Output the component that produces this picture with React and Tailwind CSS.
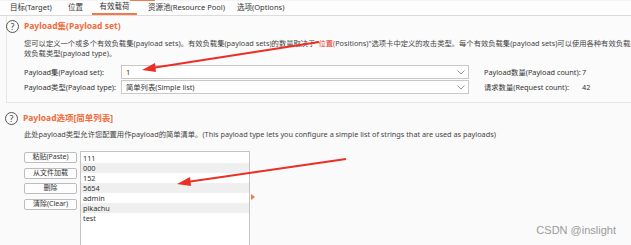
export default function App() {
  const font = { fontFamily: '"Noto Sans", "Noto Sans CJK SC", sans-serif' };
  const items = ["111", "000", "152", "5654", "admin", "pikachu", "test"];
  const Q = () => (
    <div className="w-[13px] h-[13px] rounded-full border border-[#555] flex items-center justify-center text-[9px] leading-none text-[#444] shrink-0">?</div>
  );
  const Chevron = () => (
    <svg width="8" height="5" viewBox="0 0 8 5" className="shrink-0">
      <path d="M0.5 0.5 L4 4 L7.5 0.5" fill="none" stroke="#888" strokeWidth="0.9" />
    </svg>
  );
  return (
    <div className="relative w-[631px] h-[245px] overflow-hidden bg-[#fafafa] text-[#333]" style={font}>
      {/* top strip */}
      <div className="h-[1px] flex bg-[#f4f4f4]">
        <div className="ml-[130px] w-[25px] h-[1px] bg-[#f07b4a]" />
      </div>
      {/* tabs */}
      <div className="h-[15px] flex items-stretch bg-[#fdfdfd] border-b border-[#dcdcdc] text-[7.5px] text-[#333]">
        <div className="pl-[10px] w-[68px] flex items-center whitespace-nowrap">目标(Target)</div>
        <div className="w-[24px] flex items-center whitespace-nowrap">位置</div>
        <div className="w-[45px] flex items-center justify-center border-b-2 border-[#f07b4a] whitespace-nowrap">有效载荷</div>
        <div className="pl-[11px] w-[100px] flex items-center whitespace-nowrap">资源池(Resource Pool)</div>
        <div className="flex items-center whitespace-nowrap">选项(Options)</div>
      </div>
      {/* section 1 */}
      <div className="ml-[6px] h-[87px] border-l border-b border-[#e6e6e6] bg-[#fbfbfb]">
        <div className="flex items-center gap-[5px] h-[21px] -ml-[1px]">
          <Q />
          <div className="text-[8.5px] font-bold text-[#f26b3a] leading-none whitespace-nowrap">Payload集(Payload set)</div>
        </div>
        <div className="pl-[17px] pt-[2px] text-[7.3px] leading-[9.5px] text-[#444] whitespace-nowrap">
          <div>您可以定义一个或多个有效负载集(payload sets)。有效负载集(payload sets)的数量取决于"<span className="text-[#e03c2c]">位置(</span>Positions)"选项卡中定义的攻击类型。每个有效负载集(payload sets)可以使用各种有效负载类型(payload</div>
          <div>效负载类型(payload type)。</div>
        </div>
        <div className="pl-[17px] mt-[7px] flex flex-col gap-[1px] text-[7.3px] text-[#333]">
          <div className="flex items-center h-[14px]">
            <div className="w-[97px] whitespace-nowrap">Payload集(Payload set):</div>
            <div className="w-[348px] h-[14px] bg-white border border-[#c8c8c8] flex items-center justify-between pl-[4px] pr-[3px]">
              <span>1</span>
              <Chevron />
            </div>
            <div className="ml-[15px] w-[98px] whitespace-nowrap">Payload数量(Payload count):</div>
            <div>7</div>
          </div>
          <div className="flex items-center h-[14px]">
            <div className="w-[97px] whitespace-nowrap">Payload类型(Payload type):</div>
            <div className="w-[348px] h-[14px] bg-white border border-[#c8c8c8] flex items-center justify-between pl-[4px] pr-[3px]">
              <span>简单列表(Simple list)</span>
              <Chevron />
            </div>
            <div className="ml-[15px] w-[98px] whitespace-nowrap">请求数量(Request count):</div>
            <div>42</div>
          </div>
        </div>
      </div>
      {/* section 2 */}
      <div className="pl-[5px]">
        <div className="flex items-center gap-[5px] h-[14px] mt-[8px]">
          <Q />
          <div className="text-[8.5px] font-bold text-[#f26b3a] leading-none whitespace-nowrap">Payload选项[简单列表]</div>
        </div>
        <div className="pl-[19px] mt-[5px] text-[7.3px] leading-[9px] text-[#444] whitespace-nowrap">
          此处payload类型允许您配置用作payload的简单清单。(This payload type lets you configure a simple list of strings that are used as payloads)
        </div>
        <div className="pl-[19px] mt-[12px] flex items-start">
          <div className="w-[53px] flex flex-col gap-[4.5px] pt-[1px]">
            {["粘贴(Paste)", "从文件加载", "删除", "清除(Clear)"].map((t) => (
              <div key={t} className="h-[11px] rounded-[2px] border border-[#bdbdbd] bg-[#fdfdfd] flex items-center justify-center text-[7px] text-[#333] whitespace-nowrap">{t}</div>
            ))}
          </div>
          <div className="ml-[3px] w-[170px] h-[95px] border border-[#c4c4c4] bg-white pt-[1px]">
            {items.map((t, i) => (
              <div key={t} className={`h-[10px] pl-[2px] flex items-center text-[7.3px] text-[#333] ${i % 2 === 1 ? "bg-[#efefef]" : ""}`}>{t}</div>
            ))}
          </div>
          <div className="ml-[1px] mt-[43px] w-0 h-0 border-y-[3px] border-y-transparent border-l-[4px] border-l-[#f07b4a]" />
        </div>
      </div>
      {/* watermark */}
      <div className="absolute right-[15px] bottom-[9px] text-[11px] text-[#9a9a9a] leading-none" style={{ fontFamily: '"Liberation Sans", sans-serif' }}>CSDN @inslight</div>
      {/* arrows */}
      <svg className="absolute inset-0 pointer-events-none" width="631" height="245">
        <line x1="319" y1="42" x2="152" y2="68" stroke="#ec2f24" strokeWidth="2" />
        <polygon points="142,70 155,63 156,72" fill="#ec2f24" />
        <line x1="346" y1="159" x2="187" y2="182" stroke="#ec2f24" strokeWidth="2" />
        <polygon points="177,184 190,177 191,186" fill="#ec2f24" />
      </svg>
    </div>
  );
}
